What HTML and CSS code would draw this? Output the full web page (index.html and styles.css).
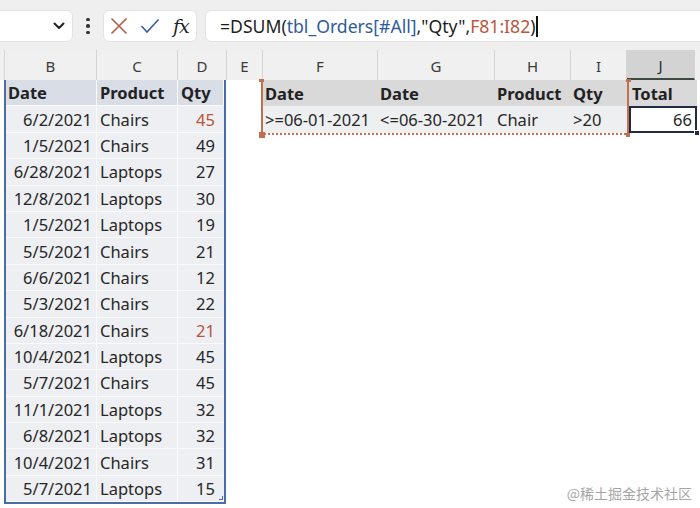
FILE: index.html
```html
<!DOCTYPE html>
<html>
<head>
<meta charset="utf-8">
<link rel="stylesheet" href="styles.css">
</head>
<body>
<div class="toolbar">
  <div class="namebox">
    <svg class="chev" width="12" height="8" viewBox="0 0 12 8"><path d="M1.5 1.5 L6 6 L10.5 1.5" fill="none" stroke="#222" stroke-width="2" stroke-linecap="round" stroke-linejoin="round"/></svg>
  </div>
  <div class="dots"><span></span><span></span><span></span></div>
  <div class="btnbox">
    <svg class="ico" width="18" height="18" viewBox="0 0 18 18"><path d="M1.5 1.5 L16.5 16.5 M16.5 1.5 L1.5 16.5" fill="none" stroke="#b85a45" stroke-width="1.6"/></svg>
    <svg class="ico" width="20" height="18" viewBox="0 0 20 18"><path d="M1.5 9 L7 15 L18.5 2.5" fill="none" stroke="#3a5f9c" stroke-width="1.6"/></svg>
    <span class="fx">fx</span>
  </div>
  <div class="formula"><span>=DSUM(</span><span class="f-blue">tbl_Orders[#All]</span><span>,"Qty",</span><span class="f-red">F81:I82</span><span>)</span><span class="caret"></span></div>
</div>

<div class="colhdr">
  <div class="ch c0"></div>
  <div class="ch cb">B</div>
  <div class="ch cc">C</div>
  <div class="ch cd">D</div>
  <div class="ch ce">E</div>
  <div class="ch cf">F</div>
  <div class="ch cg">G</div>
  <div class="ch chh">H</div>
  <div class="ch ci">I</div>
  <div class="ch cj sel">J</div>
  <div class="ch crest"></div>
</div>

<div class="sheet">
  <div class="gutter"></div>
  <div class="tbl">
    <div class="th">Date</div><div class="th l">Product</div><div class="th l">Qty</div>
    <div class="td r">6/2/2021</div><div class="td">Chairs</div><div class="td q red">45</div>
    <div class="td r">1/5/2021</div><div class="td">Chairs</div><div class="td q">49</div>
    <div class="td r">6/28/2021</div><div class="td">Laptops</div><div class="td q">27</div>
    <div class="td r">12/8/2021</div><div class="td">Laptops</div><div class="td q">30</div>
    <div class="td r">1/5/2021</div><div class="td">Laptops</div><div class="td q">19</div>
    <div class="td r">5/5/2021</div><div class="td">Chairs</div><div class="td q">21</div>
    <div class="td r">6/6/2021</div><div class="td">Chairs</div><div class="td q">12</div>
    <div class="td r">5/3/2021</div><div class="td">Chairs</div><div class="td q">22</div>
    <div class="td r">6/18/2021</div><div class="td">Chairs</div><div class="td q red">21</div>
    <div class="td r">10/4/2021</div><div class="td">Laptops</div><div class="td q">45</div>
    <div class="td r">5/7/2021</div><div class="td">Chairs</div><div class="td q">45</div>
    <div class="td r">11/1/2021</div><div class="td">Laptops</div><div class="td q">32</div>
    <div class="td r">6/8/2021</div><div class="td">Laptops</div><div class="td q">32</div>
    <div class="td r">10/4/2021</div><div class="td">Chairs</div><div class="td q">31</div>
    <div class="td r">5/7/2021</div><div class="td">Laptops</div><div class="td q last">15<span class="resize"></span></div>
  </div>
  <div class="colE"></div>
  <div class="crit">
    <div class="crange">
      <div class="kh">Date</div><div class="kh">Date</div><div class="kh">Product</div><div class="kh">Qty</div>
      <div class="kd">&gt;=06-01-2021</div><div class="kd">&lt;=06-30-2021</div><div class="kd">Chair</div><div class="kd">&gt;20</div>
      <span class="hdl tl"></span><span class="hdl tr"></span><span class="hdl bl"></span><span class="hdl br"></span>
    </div>
    <div class="jcol">
      <div class="kh total">Total</div>
      <div class="active">66<span class="fill"></span></div>
    </div>
  </div>
</div>

<div class="watermark">@稀土掘金技术社区</div>
</body>
</html>
```

FILE: styles.css
```css
* { box-sizing: border-box; }
html, body { margin: 0; padding: 0; }
body {
  width: 700px;
  height: 508px;
  overflow: hidden;
  background: #ffffff;
  font-family: "Noto Sans", "Open Sans", sans-serif;
  color: #262626;
  position: relative;
}

/* ---------- toolbar ---------- */
.toolbar {
  height: 50px;
  background: #efefef;
  display: flex;
  align-items: flex-start;
  padding-top: 10px;
}
.namebox {
  margin-left: -22px;
  width: 95px;
  height: 32px;
  background: #fff;
  border: 1px solid #e2e2e2;
  border-radius: 6px;
  display: flex;
  align-items: center;
  justify-content: flex-end;
  padding-right: 7px;
}
.dots {
  width: 30px;
  height: 32px;
  display: flex;
  flex-direction: column;
  align-items: center;
  justify-content: center;
  gap: 3px;
}
.dots span {
  width: 3.5px;
  height: 3.5px;
  border-radius: 50%;
  background: #333;
}
.btnbox {
  width: 94px;
  height: 32px;
  background: #fff;
  border: 1px solid #e2e2e2;
  border-radius: 6px;
  display: flex;
  align-items: center;
  padding-left: 6px;
  gap: 12px;
}
.fx {
  font-family: "DejaVu Serif", "Liberation Serif", serif;
  font-style: italic;
  font-size: 19px;
  color: #222;
  margin-left: 1px;
  letter-spacing: -1px;
}
.formula {
  margin-left: 8px;
  flex: 1;
  margin-right: -10px;
  height: 32px;
  background: #fff;
  border: 1px solid #e2e2e2;
  border-radius: 6px;
  padding-left: 14px;
  display: flex;
  align-items: center;
  font-size: 17.6px;
  color: #1e1e1e;
  white-space: pre;
}
.f-blue { color: #2f5b9a; }
.f-red { color: #b9573c; }
.caret {
  width: 1.5px;
  height: 21px;
  background: #111;
  margin-left: 1px;
}

/* ---------- column header ---------- */
.colhdr {
  height: 30px;
  display: flex;
  background: #f0f0f0;
}
.ch {
  height: 30px;
  border-right: 1px solid #d4d4d4;
  display: flex;
  align-items: center;
  justify-content: center;
  font-size: 15px;
  color: #3a3a3a;
  padding-top: 2px;
}
.c0 { width: 5px; }
.cb { width: 92px; }
.cc { width: 81px; }
.cd { width: 49px; }
.ce { width: 36px; }
.cf { width: 115px; }
.cg { width: 117px; }
.chh { width: 76px; }
.ci { width: 56px; }
.cj { width: 68px; }
.crest { flex: 1; border-right: none; }
.ch.sel {
  background: #d3d3d3;
  border-bottom: 2px solid #3d4a3f;
  color: #2a2a2a;
}

/* ---------- sheet ---------- */
.sheet {
  display: flex;
  align-items: flex-start;
}
.gutter { width: 4px; }
.tbl {
  display: grid;
  grid-template-columns: 91px 81px 46px;
  grid-auto-rows: 26.4px;
  border-left: 2px solid #4a6daa;
  border-right: 2px solid #4a6daa;
  border-bottom: 2px solid #4a6daa;
  font-size: 16.5px;
}
.th, .td {
  display: flex;
  align-items: center;
  white-space: nowrap;
  border-right: 1px solid #fafafb;
  border-bottom: 1px solid #fafafb;
}
.th {
  background: #d8dde6;
  font-weight: 700;
  justify-content: flex-start;
  padding-left: 2px;
  color: #222;
}
.th.l { padding-left: 3px; }
.td {
  background: #eeeff2;
  padding-left: 3px;
  color: #262626;
}
.td.r { justify-content: flex-end; padding-right: 4px; }
.td.q { justify-content: flex-end; padding-right: 9px; border-right: none; }
.td.red { color: #b8553b; }
.td.last { position: relative; }
.resize {
  position: absolute;
  right: 1px;
  bottom: 1px;
  width: 4px;
  height: 4px;
  border-right: 1.5px solid #4a6daa;
  border-bottom: 1.5px solid #4a6daa;
}
.colE { width: 36px; }

.crit {
  display: flex;
  align-items: flex-start;
  font-size: 16.5px;
}
.crange {
  position: relative;
  display: grid;
  grid-template-columns: 115px 117px 76px 56px;
  grid-auto-rows: 26.4px;
  border-left: 2px solid #c0714f;
  border-right: 2px solid #c0714f;
  border-bottom: 2px dotted #c0714f;
  margin-left: -1px;
}
.kh, .kd {
  display: flex;
  align-items: center;
  white-space: nowrap;
  padding-left: 2px;
}
.kh {
  background: #d9d9d9;
  font-weight: 700;
  color: #222;
}
.kd {
  background: #eeeff1;
  color: #262626;
}
.hdl {
  position: absolute;
  width: 6px;
  height: 6px;
  background: #c0714f;
}
.hdl.tl { left: -4px; top: -1px; width: 5px; height: 3px; }
.hdl.tr { right: -4px; top: -1px; width: 5px; height: 3px; }
.hdl.bl { left: -4px; bottom: -5px; }
.hdl.br { right: -3px; bottom: -4px; width: 4px; height: 4px; }

.jcol {
  display: flex;
  flex-direction: column;
  width: 68px;
}
.kh.total {
  height: 26.4px;
  padding-left: 3px;
}
.active {
  position: relative;
  height: 26.4px;
  border: 2px solid #1f2b47;
  display: flex;
  align-items: center;
  justify-content: flex-end;
  padding-right: 3px;
  color: #262626;
  background: #fff;
}
.fill {
  position: absolute;
  right: -5px;
  bottom: -5px;
  width: 6px;
  height: 6px;
  background: #1f2b47;
  border: 1px solid #fff;
}

.watermark {
  position: absolute;
  right: 8px;
  bottom: 5px;
  font-family: "Noto Sans CJK SC", "Noto Sans", sans-serif;
  font-size: 14px;
  color: #a6a6a6;
}
```
